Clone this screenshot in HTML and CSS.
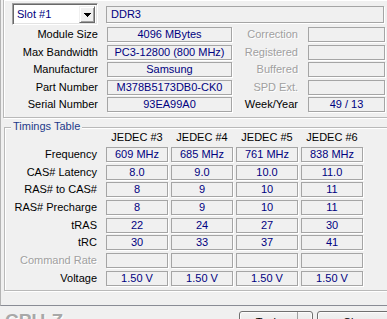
FILE: index.html
```html
<!DOCTYPE html>
<html>
<head>
<meta charset="utf-8">
<link rel="stylesheet" href="styles.css">
</head>
<body>
<div class="page">
  <div class="grp grp-slot">
    <div class="row row0">
      <div class="combo">
        <span class="combo-text">Slot #1</span>
        <span class="combo-btn"><svg width="7" height="4" viewBox="0 0 7 4" shape-rendering="crispEdges"><rect x="0" y="0" width="7" height="1" fill="#000"/><rect x="1" y="1" width="5" height="1" fill="#000"/><rect x="2" y="2" width="3" height="1" fill="#000"/><rect x="3" y="3" width="1" height="1" fill="#000"/></svg></span>
      </div>
      <div class="box ddr">DDR3</div>
    </div>
    <div class="row"><span class="lbl">Module Size</span><span class="box val">4096 MBytes</span><span class="rlbl dis">Correction</span><span class="box rval"></span></div>
    <div class="row"><span class="lbl">Max Bandwidth</span><span class="box val">PC3-12800 (800 MHz)</span><span class="rlbl dis">Registered</span><span class="box rval"></span></div>
    <div class="row"><span class="lbl">Manufacturer</span><span class="box val">Samsung</span><span class="rlbl dis">Buffered</span><span class="box rval"></span></div>
    <div class="row"><span class="lbl">Part Number</span><span class="box val">M378B5173DB0-CK0</span><span class="rlbl dis">SPD Ext.</span><span class="box rval"></span></div>
    <div class="row"><span class="lbl">Serial Number</span><span class="box val">93EA99A0</span><span class="rlbl">Week/Year</span><span class="box rval">49 / 13</span></div>
  </div>
  <div class="grp grp-tim">
    <span class="gtitle">Timings Table</span>
    <div class="trow head"><span class="tlbl"></span><span class="th">JEDEC #3</span><span class="th">JEDEC #4</span><span class="th">JEDEC #5</span><span class="th">JEDEC #6</span></div>
    <div class="trow first"><span class="tlbl">Frequency</span><span class="box tc">609 MHz</span><span class="box tc">685 MHz</span><span class="box tc">761 MHz</span><span class="box tc">838 MHz</span></div>
    <div class="trow"><span class="tlbl">CAS# Latency</span><span class="box tc">8.0</span><span class="box tc">9.0</span><span class="box tc">10.0</span><span class="box tc">11.0</span></div>
    <div class="trow"><span class="tlbl">RAS# to CAS#</span><span class="box tc">8</span><span class="box tc">9</span><span class="box tc">10</span><span class="box tc">11</span></div>
    <div class="trow"><span class="tlbl">RAS# Precharge</span><span class="box tc">8</span><span class="box tc">9</span><span class="box tc">10</span><span class="box tc">11</span></div>
    <div class="trow"><span class="tlbl">tRAS</span><span class="box tc">22</span><span class="box tc">24</span><span class="box tc">27</span><span class="box tc">30</span></div>
    <div class="trow"><span class="tlbl">tRC</span><span class="box tc">30</span><span class="box tc">33</span><span class="box tc">37</span><span class="box tc">41</span></div>
    <div class="trow"><span class="tlbl dis">Command Rate</span><span class="box tc"></span><span class="box tc"></span><span class="box tc"></span><span class="box tc"></span></div>
    <div class="trow"><span class="tlbl">Voltage</span><span class="box tc">1.50 V</span><span class="box tc">1.50 V</span><span class="box tc">1.50 V</span><span class="box tc">1.50 V</span></div>
  </div>
</div>
<div class="footer">
  <span class="logo">CPU-Z</span>
  <div class="btn split"><span class="btn-main">Tools</span><span class="btn-arrow"><svg width="7" height="4" viewBox="0 0 7 4"><polygon points="0,0 7,0 3.5,4" fill="#000"/></svg></span></div>
  <span></span>
  <div class="btn">Close</div>
</div>
</body>
</html>
```
FILE: styles.css
```css
html, body {
  margin: 0;
  padding: 0;
}
body {
  width: 387px;
  height: 319px;
  overflow: hidden;
  background: #f0f0f0;
  font-family: "Liberation Sans", Arial, sans-serif;
  font-size: 11px;
  color: #000;
}
.page {
  width: 400px;
  height: 305px;
  border-left: 1px solid #b4b4b4;
  border-bottom: 1px solid #898c95;
}
.grp {
  position: relative;
  border: 1px solid #b9b9b9;
  box-shadow: inset 1px 1px 0 #fff, 1px 1px 0 #fff;
}
.grp-slot {
  border-top: none;
  margin-left: 2px;
  padding: 3px 0 4.6px 8px;
}
.row {
  display: flex;
  align-items: center;
  height: 15px;
  margin-top: 2.6px;
  line-height: 15px;
}
.row0 {
  height: 22px;
  margin-top: 0;
  margin-bottom: -0.6px;
}
.lbl {
  width: 86px;
  margin-right: 9px;
  text-align: right;
  white-space: nowrap;
}
.rlbl {
  width: 66px;
  margin-right: 10px;
  text-align: right;
  white-space: nowrap;
}
.dis {
  color: #a0a0a0;
  text-shadow: 1px 1px 0 #fff;
}
.box {
  box-sizing: border-box;
  height: 15px;
  line-height: 13px;
  border: 1px solid #a5a5a5;
  box-shadow: 1px 1px 0 #fff;
  color: #000080;
  text-align: center;
  white-space: nowrap;
  overflow: hidden;
}
.val {
  width: 125px;
}
.rval {
  width: 77px;
}
.combo {
  box-sizing: border-box;
  width: 86px;
  height: 22px;
  margin-right: 8px;
  border: 1px solid;
  border-color: #a0a0a0 #fff #fff #a0a0a0;
  box-shadow: inset 1px 1px 0 #696969, inset -1px -1px 0 #e3e3e3;
  background: #fff;
  display: flex;
  align-items: center;
  padding: 2px 2px 2px 4px;
}
.combo-text {
  flex: 1;
  color: #000080;
  line-height: 16px;
}
.combo-btn {
  box-sizing: border-box;
  width: 16px;
  height: 17px;
  background: #f0f0f0;
  border: 1px solid;
  border-color: #f0f0f0 #696969 #696969 #f0f0f0;
  box-shadow: inset 1px 1px 0 #fff, inset -1px -1px 0 #a0a0a0;
  display: flex;
  align-items: center;
  justify-content: center;
}
.combo-btn svg {
  display: block;
  margin-top: 1px;
}
.ddr {
  width: 278px;
  height: 17px;
  line-height: 15px;
  text-align: left;
  padding-left: 4px;
}
.grp-tim {
  margin: 9px 0 0 3px;
  padding: 2px 0 4.1px 0;
}
.gtitle {
  position: absolute;
  left: 6px;
  top: -7.5px;
  line-height: 13px;
  padding: 0 2px;
  background: #f0f0f0;
  color: #1e3a8a;
}
.trow {
  display: flex;
  align-items: center;
  height: 15px;
  line-height: 15px;
  margin-top: 2.7px;
}
.trow.head {
  margin-top: 0;
}
.trow.first {
  margin-top: 2px;
}
.tlbl {
  width: 92px;
  margin-right: 9px;
  text-align: right;
  white-space: nowrap;
}
.th {
  width: 62px;
  margin-right: 3px;
  text-align: center;
  white-space: nowrap;
}
.tc {
  width: 62px;
  margin-right: 3px;
}
.footer {
  display: grid;
  grid-template-columns: 234px 74px 4px 80px;
  padding: 5px 0 0 5px;
  height: 40px;
}
.logo {
  font-size: 19px;
  font-weight: bold;
  line-height: 19px;
  color: #a8a8a8;
  text-shadow: 1px 1px 0 #fff;
  margin-top: -0.5px;
}
.btn {
  box-sizing: border-box;
  height: 22px;
  border: 1px solid #707070;
  border-radius: 3px;
  background: linear-gradient(#f2f2f2 0%, #ebebeb 50%, #dddddd 50%, #cfcfcf 100%);
  box-shadow: inset 0 0 0 1px #fcfcfc;
  text-align: center;
  line-height: 20px;
  display: flex;
  justify-content: center;
}
.split {
  justify-content: flex-start;
}
.btn-main {
  width: 57px;
  text-align: center;
}
.btn-arrow {
  flex: 1;
  border-left: 1px solid #a0a0a0;
  display: flex;
  align-items: center;
  justify-content: center;
}
```
